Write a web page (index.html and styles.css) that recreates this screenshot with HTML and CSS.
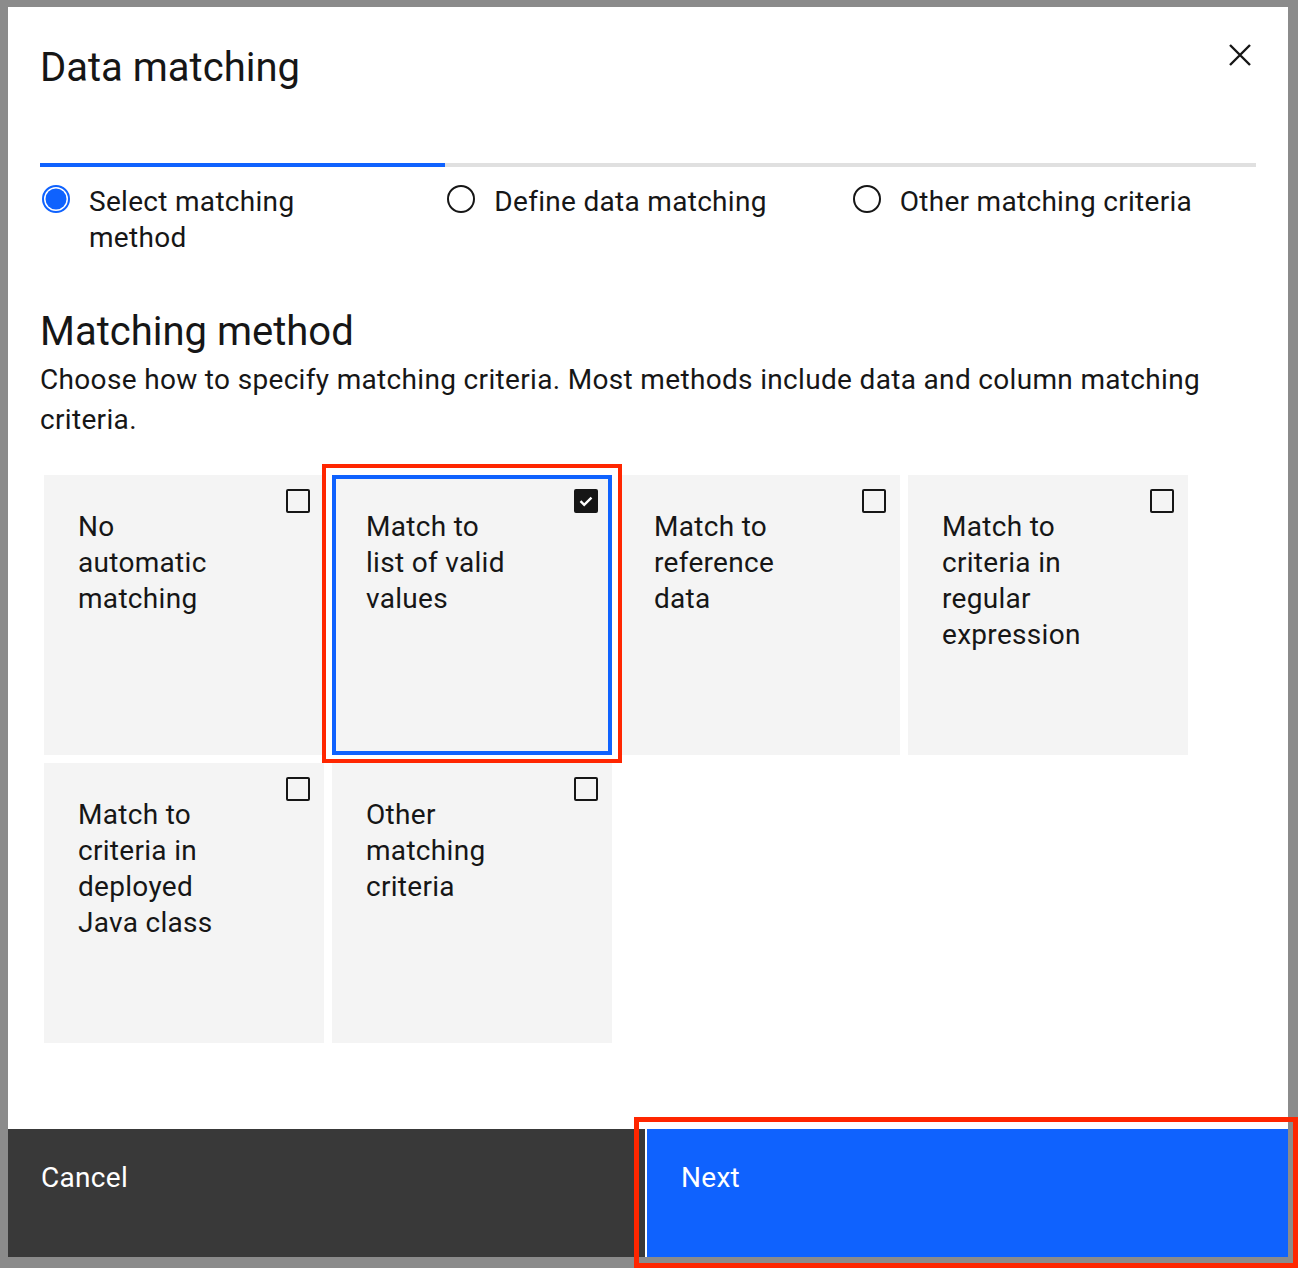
FILE: index.html
```html
<!DOCTYPE html>
<html lang="en">
<head>
<meta charset="utf-8">
<title>Data matching</title>
<link rel="stylesheet" href="styles.css">
</head>
<body>
<div class="backdrop">
  <div class="modal">
    <header class="modal-header">
      <h2 class="modal-title">Data matching</h2>
      <button class="close-btn" aria-label="Close">
        <svg width="24" height="24" viewBox="0 0 24 24"><path d="M2 2 L22 22 M22 2 L2 22" stroke="#161616" stroke-width="2.4" fill="none"/></svg>
      </button>
    </header>

    <ol class="progress">
      <li class="step current">
        <svg class="step-icon" width="28" height="28" viewBox="0 0 28 28"><circle cx="14" cy="14" r="13" fill="none" stroke="#0f62fe" stroke-width="2"/><circle cx="14" cy="14" r="10.5" fill="#0f62fe"/></svg>
        <span class="step-label">Select matching<br>method</span>
      </li>
      <li class="step">
        <svg class="step-icon" width="28" height="28" viewBox="0 0 28 28"><circle cx="14" cy="14" r="13" fill="none" stroke="#161616" stroke-width="2"/></svg>
        <span class="step-label">Define data matching</span>
      </li>
      <li class="step">
        <svg class="step-icon" width="28" height="28" viewBox="0 0 28 28"><circle cx="14" cy="14" r="13" fill="none" stroke="#161616" stroke-width="2"/></svg>
        <span class="step-label">Other matching criteria</span>
      </li>
    </ol>

    <section class="content">
      <h3 class="section-title">Matching method</h3>
      <p class="section-desc">Choose how to specify matching criteria. Most methods include data and column matching<br>criteria.</p>

      <div class="tiles">
        <div class="tile">
          <span class="tile-text">No<br>automatic<br>matching</span>
          <span class="checkbox"></span>
        </div>
        <div class="tile selected">
          <span class="tile-text">Match to<br>list of valid<br>values</span>
          <span class="checkbox checked">
            <svg width="24" height="24" viewBox="0 0 24 24"><path d="M6.5 12.2 L10.2 15.8 L17.5 8.6" stroke="#fff" stroke-width="2.4" fill="none"/></svg>
          </span>
        </div>
        <div class="tile">
          <span class="tile-text">Match to<br>reference<br>data</span>
          <span class="checkbox"></span>
        </div>
        <div class="tile">
          <span class="tile-text">Match to<br>criteria in<br>regular<br>expression</span>
          <span class="checkbox"></span>
        </div>
        <div class="tile">
          <span class="tile-text">Match to<br>criteria in<br>deployed<br>Java class</span>
          <span class="checkbox"></span>
        </div>
        <div class="tile">
          <span class="tile-text">Other<br>matching<br>criteria</span>
          <span class="checkbox"></span>
        </div>
      </div>
    </section>

    <footer class="modal-footer">
      <button class="btn btn-secondary">Cancel</button>
      <button class="btn btn-primary">Next</button>
    </footer>
  </div>
</div>

<div class="annot annot-tile"></div>
<div class="annot annot-next"></div>
</body>
</html>
```

FILE: styles.css
```css
* { box-sizing: border-box; }

html, body {
  margin: 0;
  padding: 0;
}

body {
  width: 1298px;
  height: 1268px;
  overflow: hidden;
  background: #8b8b8b;
  font-family: Roboto, "Liberation Sans", sans-serif;
  color: #161616;
  position: relative;
}

.backdrop {
  padding: 7px 0 0 8px;
}

.modal {
  width: 1280px;
  height: 1250px;
  background: #ffffff;
  display: flex;
  flex-direction: column;
  position: relative;
}

.modal-header {
  padding: 37px 32px 0 32px;
}

.modal-title {
  margin: 0;
  font-size: 40px;
  line-height: 48px;
  font-weight: 400;
  letter-spacing: 0;
}

.close-btn {
  position: absolute;
  top: 36px;
  right: 36px;
  width: 24px;
  height: 24px;
  padding: 0;
  border: 0;
  background: transparent;
  display: flex;
}

.progress {
  list-style: none;
  margin: 71px 32px 0 32px;
  padding: 0;
  display: grid;
  grid-template-columns: repeat(3, 1fr);
}

.step {
  border-top: 4px solid #e0e0e0;
  padding-top: 17px;
  display: flex;
  align-items: flex-start;
  gap: 19px;
  padding-left: 2px;
}

.step.current {
  border-top-color: #0f62fe;
}

.step-icon {
  flex: none;
  margin-top: 1px;
}

.step-label {
  font-size: 28px;
  line-height: 36px;
  letter-spacing: 0.3px;
}

.content {
  padding: 52px 32px 0 32px;
}

.section-title {
  margin: 0;
  font-size: 40px;
  line-height: 48px;
  font-weight: 400;
}

.section-desc {
  margin: 4px 0 0 0;
  font-size: 28px;
  line-height: 40px;
  letter-spacing: 0.33px;
}

.tiles {
  margin: 35px 0 0 4px;
  display: grid;
  grid-template-columns: repeat(4, 280px);
  grid-auto-rows: 280px;
  gap: 8px;
}

.tile {
  background: #f4f4f4;
  position: relative;
  padding: 34px 0 0 34px;
  display: flex;
  justify-content: space-between;
  align-items: flex-start;
}

.tile.selected {
  box-shadow: inset 0 0 0 4px #0f62fe;
}

.tile-text {
  font-size: 28px;
  line-height: 36px;
  letter-spacing: 0.3px;
}

.checkbox {
  position: absolute;
  top: 14px;
  right: 14px;
  width: 24px;
  height: 24px;
  border: 2px solid #161616;
  border-radius: 2px;
  display: flex;
}

.checkbox.checked {
  background: #161616;
  border-color: #161616;
}

.checkbox.checked svg {
  margin: -2px;
}

.modal-footer {
  margin-top: auto;
  height: 128px;
  display: grid;
  grid-template-columns: 637px 1fr;
  gap: 2px;
}

.btn {
  border: 0;
  margin: 0;
  font-family: inherit;
  font-size: 28px;
  line-height: 36px;
  letter-spacing: 0.3px;
  color: #ffffff;
  padding: 31px 0 0 33px;
  display: flex;
  align-items: flex-start;
  justify-content: flex-start;
}

.btn-secondary {
  background: #393939;
}

.btn-primary {
  background: #0f62fe;
  padding-left: 34px;
}

.annot {
  position: absolute;
  border-style: solid;
  border-color: #ff2600;
  pointer-events: none;
}

.annot-tile {
  left: 322px;
  top: 464px;
  width: 300px;
  height: 299px;
  border-width: 4px;
}

.annot-next {
  left: 634px;
  top: 1117px;
  width: 664px;
  height: 151px;
  border-width: 5px;
}
```
